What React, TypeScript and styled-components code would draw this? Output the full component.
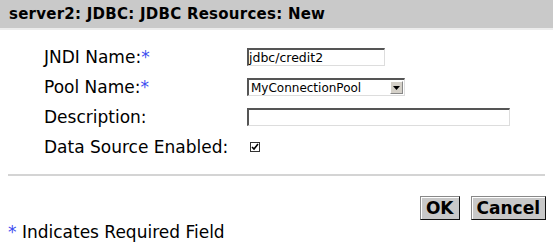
import React from "react";
import styled, { createGlobalStyle } from "styled-components";

const Global = createGlobalStyle`
  html, body { margin: 0; padding: 0; background: #fff; }
  body { font-family: "DejaVu Sans", Verdana, sans-serif; color: #000; }
`;

const Page = styled.div`
  width: 553px;
  height: 246px;
  display: flex;
  flex-direction: column;
  overflow: hidden;
`;

const Header = styled.div`
  height: 28px;
  background: #c9c9c9;
  border-bottom: 2px solid #ececec;
  display: flex;
  align-items: center;
  padding-left: 9px;
  font-weight: bold;
  font-size: 15px;
  letter-spacing: 0.25px;
`;

const Form = styled.div`
  display: grid;
  grid-template-columns: 203px 1fr;
  grid-auto-rows: 30px;
  padding: 12px 0 0 44px;
  align-items: center;
`;

const Label = styled.div`
  font-size: 17px;
`;

const Star = styled.span`
  color: #3c4cf0;
`;

const TextInput = styled.div<{ w: number }>`
  width: ${(p) => p.w}px;
  height: 18px;
  box-sizing: border-box;
  border-top: 2px solid #555;
  border-left: 2px solid #555;
  border-right: 1px solid #ddd;
  border-bottom: 1px solid #ddd;
  font-size: 12.5px;
  line-height: 15px;
  padding-left: 0px;
  background: #fff;
`;

const Select = styled.div`
  width: 158px;
  height: 18px;
  box-sizing: border-box;
  border-top: 2px solid #555;
  border-left: 2px solid #555;
  border-right: 1px solid #ddd;
  border-bottom: 1px solid #ddd;
  display: flex;
  align-items: center;
  font-size: 12px;
  padding-left: 2px;
`;

const SelectText = styled.span`
  flex: 1;
`;

const Arrow = styled.div`
  width: 13px;
  height: 13px;
  background: #d4d0c8;
  border: 1px solid #888;
  border-top-color: #fff;
  border-left-color: #fff;
  box-sizing: border-box;
  display: flex;
  align-items: center;
  justify-content: center;
  margin-right: 1px;
`;

const Check = styled.div`
  width: 10px;
  height: 10px;
  box-sizing: border-box;
  border: 1px solid #333;
  margin-left: 3px;
  display: flex;
  align-items: center;
  justify-content: center;
`;

const Rule = styled.div`
  height: 2px;
  background: #d4d4d4;
  margin: 12px 8px 0 8px;
`;

const Buttons = styled.div`
  display: flex;
  justify-content: flex-end;
  gap: 11px;
  padding: 20px 7px 0 0;
`;

const Button = styled.div`
  height: 24px;
  box-sizing: border-box;
  padding: 0 5px;
  background: #c8c8c8;
  border: 1px solid #111;
  border-top-color: #888;
  border-left-color: #888;
  box-shadow: inset 1px 1px 0 #fff;
  font-weight: bold;
  font-size: 17px;
  display: flex;
  align-items: center;
`;

const Footer = styled.div`
  padding: 2px 0 0 8px;
  font-size: 17px;
`;

export default function App() {
  return (
    <Page>
      <Global />
      <Header>server2: JDBC: JDBC Resources: New</Header>
      <Form>
        <Label>
          JNDI Name:<Star>*</Star>
        </Label>
        <TextInput w={138}>jdbc/credit2</TextInput>
        <Label>
          Pool Name:<Star>*</Star>
        </Label>
        <Select>
          <SelectText>MyConnectionPool</SelectText>
          <Arrow>
            <svg width="7" height="4" viewBox="0 0 7 4">
              <path d="M0 0h7L3.5 4z" fill="#000" />
            </svg>
          </Arrow>
        </Select>
        <Label>Description:</Label>
        <TextInput w={263} />
        <Label>Data Source Enabled:</Label>
        <Check>
          <svg width="8" height="8" viewBox="0 0 8 8">
            <path d="M1 4l2 2 4-5" stroke="#000" strokeWidth="1.6" fill="none" />
          </svg>
        </Check>
      </Form>
      <Rule />
      <Buttons>
        <Button>OK</Button>
        <Button>Cancel</Button>
      </Buttons>
      <Footer>
        <Star>*</Star> Indicates Required Field
      </Footer>
    </Page>
  );
}
